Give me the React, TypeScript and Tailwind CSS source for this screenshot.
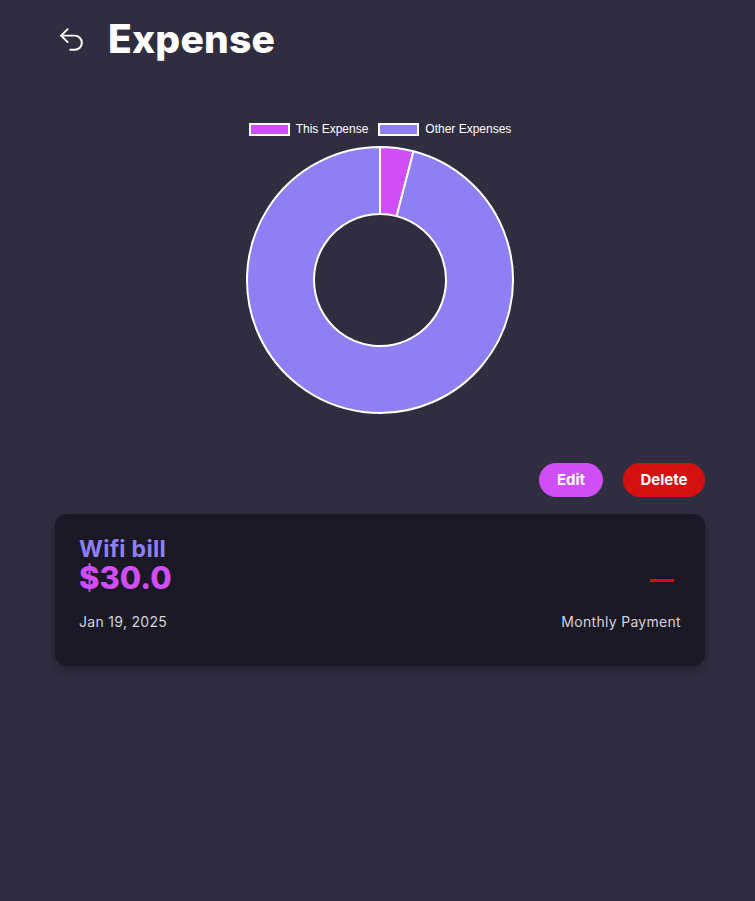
import { Undo2 } from 'lucide-react';

const R = 133;
const r = 66;
const C = 135;

const pt = (rad: number, deg: number) => {
  const a = ((deg - 90) * Math.PI) / 180;
  return `${(C + rad * Math.cos(a)).toFixed(2)} ${(C + rad * Math.sin(a)).toFixed(2)}`;
};

const slice = (from: number, to: number) => {
  const large = to - from > 180 ? 1 : 0;
  return `M ${pt(R, from)} A ${R} ${R} 0 ${large} 1 ${pt(R, to)} L ${pt(r, to)} A ${r} ${r} 0 ${large} 0 ${pt(r, from)} Z`;
};

const thisShare = 30 / 740;

function Donut() {
  const end = thisShare * 360;
  return (
    <svg width={270} height={270} viewBox="0 0 270 270">
      <path d={slice(0, end)} fill="#d04ef5" stroke="#ffffff" strokeWidth={2} strokeLinejoin="round" />
      <path d={slice(end, 360 - 0.001)} fill="#8e80f2" stroke="#ffffff" strokeWidth={2} strokeLinejoin="round" />
    </svg>
  );
}

export default function App() {
  return (
    <div className="min-h-[901px] w-full bg-[#302d41] pl-[55px] pr-[50px] pt-[18px]" style={{ fontFamily: 'Inter, "Noto Sans", sans-serif' }}>
      {/* Header */}
      <div className="flex items-center gap-[21px]">
        <Undo2 size={31} strokeWidth={1.5} className="ml-[1px] text-white" />
        <h1 className="text-[39px] font-extrabold text-white leading-[42px] tracking-[0.2px]">Expense</h1>
      </div>

      {/* Chart */}
      <div className="mt-[60px] flex flex-col items-center">
        <div className="flex items-center gap-[10px] text-[12px] text-white" style={{ fontFamily: '"Liberation Sans", Arial, sans-serif' }}>
          <div className="flex items-center gap-[6px]">
            <span className="block h-[13px] w-[41px] border-2 border-white bg-[#d04ef5]" />
            <span>This Expense</span>
          </div>
          <div className="flex items-center gap-[6px]">
            <span className="block h-[13px] w-[41px] border-2 border-white bg-[#8e80f2]" />
            <span>Other Expenses</span>
          </div>
        </div>
        <div className="mt-[7px]">
          <Donut />
        </div>
      </div>

      {/* Actions */}
      <div className="mt-[48px] flex justify-end gap-[20px]">
        <button className="h-[34px] w-[64px] rounded-full bg-[#d04ef5] text-[15px] font-bold text-white">Edit</button>
        <button className="h-[34px] w-[82px] rounded-full bg-[#d41111] text-[15px] font-bold text-white">Delete</button>
      </div>

      {/* Card */}
      <div className="mt-[17px] rounded-[12px] bg-[#1a1825] px-[24px] pt-[22px] pb-[34px] shadow-[0_4px_10px_rgba(0,0,0,0.3)]">
        <div className="flex items-center justify-between">
          <div>
            <div className="text-[23px] font-bold leading-[26px] tracking-[0.3px] text-[#8e80f2]">Wifi bill</div>
            <div className="text-[31px] font-extrabold leading-[32px] text-[#d04ef5]">$30.0</div>
          </div>
          <div className="mr-[7px] mt-[30px] h-[3px] w-[24px] bg-[#d41111]" />
        </div>
        <div className="mt-[17px] flex items-center justify-between text-[14px] tracking-[0.3px] text-[#d2d2dc]">
          <span>Jan 19, 2025</span>
          <span>Monthly Payment</span>
        </div>
      </div>
    </div>
  );
}
